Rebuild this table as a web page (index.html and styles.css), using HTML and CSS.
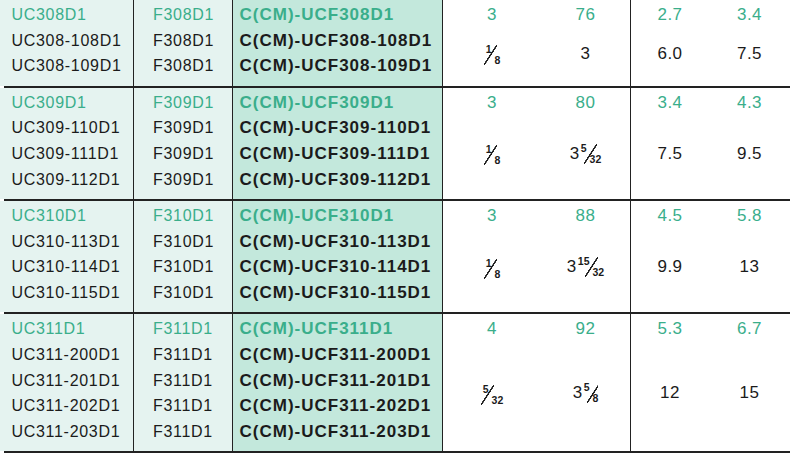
FILE: index.html
```html
<!DOCTYPE html>
<html>
<head>
<meta charset="utf-8">
<link rel="stylesheet" href="styles.css">
</head>
<body>
<div class="table">
  <div class="group">
    <div class="cell c-uc"><div class="g">UC308D1</div><div>UC308-108D1</div><div>UC308-109D1</div></div>
    <div class="cell c-f"><div class="g">F308D1</div><div>F308D1</div><div>F308D1</div></div>
    <div class="cell c-cm"><div class="g">C(CM)-UCF308D1</div><div>C(CM)-UCF308-108D1</div><div>C(CM)-UCF308-109D1</div></div>
    <div class="cell c-n"><div class="g">3</div><div class="rest"><span class="frac"><span class="fn">1</span><span class="fd">8</span></span></div></div>
    <div class="cell c-n sep"><div class="g">76</div><div class="rest">3</div></div>
    <div class="cell c-n"><div class="g">2.7</div><div class="rest">6.0</div></div>
    <div class="cell c-n"><div class="g">3.4</div><div class="rest">7.5</div></div>
  </div>
  <div class="group">
    <div class="cell c-uc"><div class="g">UC309D1</div><div>UC309-110D1</div><div>UC309-111D1</div><div>UC309-112D1</div></div>
    <div class="cell c-f"><div class="g">F309D1</div><div>F309D1</div><div>F309D1</div><div>F309D1</div></div>
    <div class="cell c-cm"><div class="g">C(CM)-UCF309D1</div><div>C(CM)-UCF309-110D1</div><div>C(CM)-UCF309-111D1</div><div>C(CM)-UCF309-112D1</div></div>
    <div class="cell c-n"><div class="g">3</div><div class="rest"><span class="frac"><span class="fn">1</span><span class="fd">8</span></span></div></div>
    <div class="cell c-n sep"><div class="g">80</div><div class="rest">3<span class="frac mixed"><span class="fn">5</span><span class="fd">32</span></span></div></div>
    <div class="cell c-n"><div class="g">3.4</div><div class="rest">7.5</div></div>
    <div class="cell c-n"><div class="g">4.3</div><div class="rest">9.5</div></div>
  </div>
  <div class="group">
    <div class="cell c-uc"><div class="g">UC310D1</div><div>UC310-113D1</div><div>UC310-114D1</div><div>UC310-115D1</div></div>
    <div class="cell c-f"><div class="g">F310D1</div><div>F310D1</div><div>F310D1</div><div>F310D1</div></div>
    <div class="cell c-cm"><div class="g">C(CM)-UCF310D1</div><div>C(CM)-UCF310-113D1</div><div>C(CM)-UCF310-114D1</div><div>C(CM)-UCF310-115D1</div></div>
    <div class="cell c-n"><div class="g">3</div><div class="rest"><span class="frac"><span class="fn">1</span><span class="fd">8</span></span></div></div>
    <div class="cell c-n sep"><div class="g">88</div><div class="rest">3<span class="frac mixed wide"><span class="fn">15</span><span class="fd">32</span></span></div></div>
    <div class="cell c-n"><div class="g">4.5</div><div class="rest">9.9</div></div>
    <div class="cell c-n"><div class="g">5.8</div><div class="rest">13</div></div>
  </div>
  <div class="group last">
    <div class="cell c-uc"><div class="g">UC311D1</div><div>UC311-200D1</div><div>UC311-201D1</div><div>UC311-202D1</div><div>UC311-203D1</div></div>
    <div class="cell c-f"><div class="g">F311D1</div><div>F311D1</div><div>F311D1</div><div>F311D1</div><div>F311D1</div></div>
    <div class="cell c-cm"><div class="g">C(CM)-UCF311D1</div><div>C(CM)-UCF311-200D1</div><div>C(CM)-UCF311-201D1</div><div>C(CM)-UCF311-202D1</div><div>C(CM)-UCF311-203D1</div></div>
    <div class="cell c-n"><div class="g">4</div><div class="rest"><span class="frac"><span class="fn">5</span><span class="fd">32</span></span></div></div>
    <div class="cell c-n sep"><div class="g">92</div><div class="rest">3<span class="frac mixed"><span class="fn">5</span><span class="fd">8</span></span></div></div>
    <div class="cell c-n"><div class="g">5.3</div><div class="rest">12</div></div>
    <div class="cell c-n"><div class="g">6.7</div><div class="rest">15</div></div>
  </div>
</div>
</body>
</html>
```
FILE: styles.css
```css
html, body {
  margin: 0;
  background: #ffffff;
}
body {
  font-family: "Liberation Sans", Arial, sans-serif;
  color: #1b1b1b;
  overflow: hidden;
}
.table {
  width: 790px;
  margin-top: -2px;
}
.group {
  display: grid;
  grid-template-columns: 134px 99px 210px 98px 90px 78px 81px;
  padding-top: 2px;
  background: linear-gradient(#222, #222) 4px 0 / calc(100% - 4px) 2px no-repeat;
}
.group.last {
  padding-bottom: 2px;
  background:
    linear-gradient(#222, #222) 4px 0 / calc(100% - 4px) 2px no-repeat,
    linear-gradient(#222, #222) 4px 100% / calc(100% - 4px) 2px no-repeat;
}
.cell {
  display: flex;
  flex-direction: column;
  padding: 2px 0 6.5px;
  line-height: 25.7px;
  font-size: 16px;
  letter-spacing: 0.7px;
  white-space: nowrap;
}
.g {
  color: #3aae8b;
}
.c-uc {
  background: #e5f3f0;
  padding-left: 11.5px;
  border-right: 1.5px solid #222;
}
.c-f {
  background: #e5f3f0;
  padding-left: 19px;
  border-right: 1.5px solid #222;
}
.c-cm {
  background: #c3e8dc;
  padding-left: 6.5px;
  font-size: 17px;
  font-weight: bold;
  letter-spacing: 1px;
  border-right: 1.5px solid #222;
}
.c-n {
  text-align: center;
  font-size: 17px;
  letter-spacing: 0.5px;
}
.c-n.sep {
  border-right: 1.5px solid #222;
}
.rest {
  flex: 1;
  display: flex;
  align-items: center;
  justify-content: center;
}
.frac {
  display: inline-flex;
  height: 20px;
  margin-top: 3px;
  line-height: 9px;
  letter-spacing: 0;
  font-size: 10.5px;
  font-weight: bold;
  background: linear-gradient(to bottom right,
      transparent calc(50% - 0.9px), #222 calc(50% - 0.6px),
      #222 calc(50% + 0.6px), transparent calc(50% + 0.9px))
    0 0 / 13px 20px no-repeat;
}
.frac.mixed {
  margin-left: 1px;
  margin-top: 0;
  background-position: 3px 0;
}
.frac.wide {
  background-position: 7px 0;
}
.fn {
  align-self: flex-start;
  margin: 0 3px 0 2px;
}
.mixed .fn {
  margin-left: 0;
}
.fd {
  align-self: flex-end;
}
```
